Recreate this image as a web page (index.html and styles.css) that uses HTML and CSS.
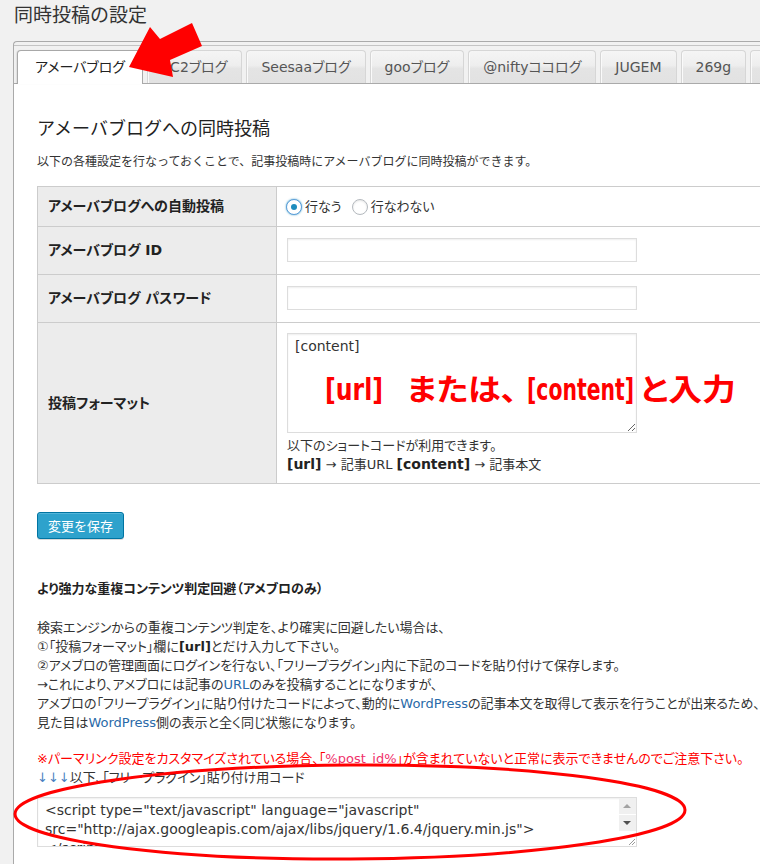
FILE: index.html
```html
<!DOCTYPE html>
<html lang="ja">
<head>
<meta charset="utf-8">
<title>同時投稿の設定</title>
<link rel="stylesheet" href="styles.css">
</head>
<body>
<div class="wrap">
  <h2 class="page-title">同時投稿の設定</h2>
  <div class="tabs">
    <ul class="tab-nav">
      <li class="tab active">アメーバブログ</li>
      <li class="tab">FC2ブログ</li>
      <li class="tab">Seesaaブログ</li>
      <li class="tab">gooブログ</li>
      <li class="tab">@niftyココログ</li>
      <li class="tab">JUGEM</li>
      <li class="tab">269g</li>
      <li class="tab">livedoor</li>
    </ul>
    <div class="tab-body">
      <h3 class="section-title">アメーバブログへの同時投稿</h3>
      <p class="desc">以下の各種設定を行なっておくことで、記事投稿時にアメーバブログに同時投稿ができます。</p>
      <table class="form-table">
        <tr class="row-radio">
          <th>アメーバブログへの自動投稿</th>
          <td>
            <label class="radio"><input type="radio" name="auto" checked>行なう</label>
            <label class="radio"><input type="radio" name="auto">行なわない</label>
          </td>
        </tr>
        <tr class="row-input">
          <th>アメーバブログ ID</th>
          <td><input type="text" class="text-input"></td>
        </tr>
        <tr class="row-input">
          <th>アメーバブログ パスワード</th>
          <td><input type="password" class="text-input"></td>
        </tr>
        <tr class="row-format">
          <th>投稿フォーマット</th>
          <td>
            <textarea class="format-area">[content]</textarea>
            <p class="help">以下のショートコードが利用できます。<br><b>[url]</b> → 記事URL <b>[content]</b> → 記事本文</p>
          </td>
        </tr>
      </table>
      <button class="save-btn" type="button">変更を保存</button>
      <h4 class="sub-title">より強力な重複コンテンツ判定回避（アメブロのみ）</h4>
      <p class="para">検索エンジンからの重複コンテンツ判定を、より確実に回避したい場合は、<br>①「投稿フォーマット」欄に<b>[url]</b>とだけ入力して下さい。<br>②アメブロの管理画面にログインを行ない、「フリープラグイン」内に下記のコードを貼り付けて保存します。<br>→これにより、アメブロには記事の<span class="en">URL</span>のみを投稿することになりますが、<br>アメブロの「フリープラグイン」に貼り付けたコードによって、動的に<span class="en">WordPress</span>の記事本文を取得して表示を行うことが出来るため、<br>見た目は<span class="en">WordPress</span>側の表示と全く同じ状態になります。</p>
      <p class="warn">※パーマリンク設定をカスタマイズされている場合、「<span class="pid">%post_id%</span>」が含まれていないと正常に表示できませんのでご注意下さい。</p>
      <p class="code-label"><span class="arrows">↓↓↓</span>以下、「フリープラグイン」貼り付け用コード</p>
      <div class="code-box">
        <textarea class="code-area">&lt;script type="text/javascript" language="javascript"
src="http://ajax.googleapis.com/ajax/libs/jquery/1.6.4/jquery.min.js"&gt;
&lt;/script&gt;
&lt;script type="text/javascript"&gt;
&lt;/script&gt;</textarea>
        <div class="fake-scroll" aria-hidden="true">
          <span class="sb-btn sb-up"></span>
          <span class="sb-btn sb-down"></span>
          <span class="sb-grip"></span>
        </div>
      </div>
    </div>
  </div>
</div>
<svg class="overlay" width="760" height="864" viewBox="0 0 760 864">
  <polygon points="129,67 150,27 160,39 192,23 202,46 170,60 173,77" fill="#ff0000"/>
  <ellipse cx="350" cy="812" rx="335" ry="47" fill="none" stroke="#ff0000" stroke-width="3" transform="rotate(-0.35 350 812)"/>
  <text class="annot" x="325" y="400" textLength="58" lengthAdjust="spacingAndGlyphs">[url]</text>
  <text class="annot" x="407" y="400" textLength="110" lengthAdjust="spacingAndGlyphs">または、</text>
  <text class="annot" x="527" y="400" textLength="107" lengthAdjust="spacingAndGlyphs">[content]</text>
  <text class="annot" x="640" y="400" textLength="96" lengthAdjust="spacingAndGlyphs">と入力</text>
</svg>
</body>
</html>
```
FILE: styles.css
```css
html, body {
  margin: 0;
  padding: 0;
  overflow: hidden;
}
body {
  position: relative;
  width: 760px;
  height: 864px;
  background: #f1f1f1;
  color: #333;
  font-family: "DejaVu Sans", "Noto Sans CJK JP", sans-serif;
  font-size: 13px;
  font-feature-settings: "palt";
}
.wrap {
  padding-left: 13px;
}
.page-title {
  margin: 0;
  padding-left: 1px;
  font-family: "Noto Sans CJK JP", sans-serif;
  font-size: 19px;
  line-height: 28px;
  font-weight: normal;
  color: #333;
  font-feature-settings: normal;
}
.tabs {
  margin-top: 13px;
  width: 900px;
  border: 1px solid #aaa;
  border-right: none;
  border-radius: 4px 0 0 0;
  background: #f1f1f1;
  padding-top: 3px;
}
.tab-nav {
  display: flex;
  align-items: flex-start;
  gap: 4px;
  margin: 0;
  padding: 4px 0 0 3px;
  list-style: none;
  border-top: 1px solid #c4c4c4;
  border-bottom: 1px solid #aaa;
}
.tab {
  height: 32px;
  line-height: 32px;
  padding: 0 14px;
  font-size: 14px;
  color: #555;
  white-space: nowrap;
  border: 1px solid #d6d6d6;
  border-bottom: none;
  border-radius: 4px 4px 0 0;
  background: linear-gradient(#f5f5f5 0%, #eeeeee 45%, #e4e4e4 55%, #e2e2e2 100%);
  box-shadow: inset 1px 0 0 #fafafa;
}
.tab.active {
  height: 33px;
  margin-bottom: -1px;
  padding: 0 17px;
  color: #222;
  background: #fff;
  border-color: #a8a8a8;
  box-shadow: -1px 0 1px rgba(0,0,0,0.08);
}
.tab-body {
  background: #fff;
  padding: 31px 0 40px 23px;
}
.section-title {
  margin: 0;
  font-family: "Noto Sans CJK JP", sans-serif;
  font-size: 18px;
  line-height: 24px;
  font-weight: normal;
  color: #222;
  font-feature-settings: normal;
}
.desc {
  margin: 14px 0 15px;
  font-size: 12px;
  line-height: 18px;
  color: #333;
  font-feature-settings: normal;
}
.form-table {
  width: 760px;
  border-collapse: collapse;
  border: 1px solid #ccc;
}
.form-table th,
.form-table td {
  border: 1px solid #ccc;
  vertical-align: middle;
  line-height: 19px;
}
.form-table th {
  width: 218px;
  padding: 0 10px;
  background: #ececec;
  text-align: left;
  font-size: 14px;
  font-weight: bold;
  color: #222;
}
.form-table td {
  padding: 0 10px;
  background: #fff;
}
.row-radio td {
  padding-top: 10px;
  padding-bottom: 10px;
}
.row-input td {
  padding-top: 11px;
  padding-bottom: 12px;
}
.row-format td {
  padding-top: 10px;
  padding-bottom: 9px;
}
.radio {
  display: inline-flex;
  align-items: center;
  vertical-align: top;
  height: 19px;
  margin-right: 7px;
  font-size: 13px;
  color: #333;
}
.radio input {
  appearance: none;
  -webkit-appearance: none;
  flex: none;
  width: 16px;
  height: 16px;
  margin: 0 3px 0 -1px;
  border: 1px solid #b4b9be;
  border-radius: 50%;
  background: #fff;
  box-shadow: inset 0 1px 2px rgba(0,0,0,0.1);
  display: flex;
  align-items: center;
  justify-content: center;
  box-sizing: border-box;
}
.radio input:checked {
  border-color: #5b9dd9;
  box-shadow: 0 0 2px rgba(30,140,190,0.8);
}
.radio input:checked::before {
  content: "";
  width: 6px;
  height: 6px;
  border-radius: 50%;
  background: #1e8cbe;
}
.text-input {
  display: block;
  box-sizing: border-box;
  width: 350px;
  height: 24px;
  margin: 0;
  border: 1px solid #ddd;
  background: #fff;
  box-shadow: inset 0 1px 2px rgba(0,0,0,0.07);
}
.format-area,
.code-area {
  display: block;
  box-sizing: border-box;
  margin: 0;
  padding: 3px 7px;
  font-family: "DejaVu Sans", "Noto Sans CJK JP", sans-serif;
  font-size: 14px;
  line-height: 19px;
  color: #333;
  background: #fff;
}
.format-area {
  width: 350px;
  height: 100px;
  margin-bottom: 4px;
  border: 1px solid #ddd;
  box-shadow: inset 0 1px 2px rgba(0,0,0,0.07);
}
.help {
  margin: 0;
  font-size: 13px;
  line-height: 18px;
  color: #333;
}
.help b {
  font-size: 14px;
  color: #222;
}
.save-btn {
  display: block;
  margin-top: 28px;
  height: 27px;
  padding: 0 10px;
  border: 1px solid #0074a2;
  border-radius: 3px;
  background: #2ea2cc;
  box-shadow: inset 0 1px 0 rgba(120,200,230,0.5), 0 1px 0 rgba(0,0,0,0.15);
  color: #fff;
  font-family: "Noto Sans CJK JP", sans-serif;
  font-size: 13px;
  line-height: 25px;
  font-feature-settings: normal;
}
.sub-title {
  margin: 41px 0 0;
  font-size: 13px;
  line-height: 18px;
  font-weight: bold;
  color: #222;
}
.para {
  margin: 20px 0 17px;
  font-size: 13px;
  line-height: 19px;
  color: #333;
  white-space: nowrap;
}
.para b {
  color: #222;
}
.en {
  color: #2a6aa8;
}
.warn {
  margin: 0;
  font-size: 13px;
  line-height: 19px;
  color: #ff0000;
  white-space: nowrap;
}
.pid {
  color: #f0306a;
}
.code-label {
  margin: 0;
  font-size: 13px;
  line-height: 19px;
  color: #333;
}
.arrows {
  color: #4a7fc1;
}
.code-box {
  display: flex;
  box-sizing: border-box;
  width: 600px;
  height: 50px;
  margin-top: 10px;
  border: 1px solid #ddd;
  background: #fff;
  box-shadow: inset 0 1px 2px rgba(0,0,0,0.07);
}
.code-area {
  flex: 1;
  min-width: 0;
  height: 48px;
  border: none;
  outline: none;
  resize: none;
  overflow: hidden;
  white-space: pre;
  background: transparent;
}
.fake-scroll {
  display: flex;
  flex-direction: column;
  width: 17px;
  flex: none;
}
.sb-btn {
  position: relative;
  display: block;
  height: 16px;
  background: #f0f0f0;
}
.sb-btn::before {
  content: "";
  position: absolute;
  left: 4px;
  top: 6px;
  border-left: 4px solid transparent;
  border-right: 4px solid transparent;
}
.sb-up::before {
  border-bottom: 4px solid #a3a3a3;
}
.sb-down::before {
  top: 6px;
  border-top: 4px solid #505050;
}
.sb-down {
  border-top: 1px solid #fff;
}
.sb-grip {
  flex: 1;
  background:
    linear-gradient(135deg, transparent 0 62%, #9a9a9a 62% 70%, transparent 70% 80%, #9a9a9a 80% 88%, transparent 88%) no-repeat right 1px bottom 1px / 9px 9px,
    #fff;
}
.overlay {
  position: absolute;
  top: 0;
  left: 0;
  pointer-events: none;
}
.annot {
  font-family: "DejaVu Sans", "Noto Sans CJK JP", sans-serif;
  font-size: 30px;
  font-weight: bold;
  fill: #ff0000;
}
```
